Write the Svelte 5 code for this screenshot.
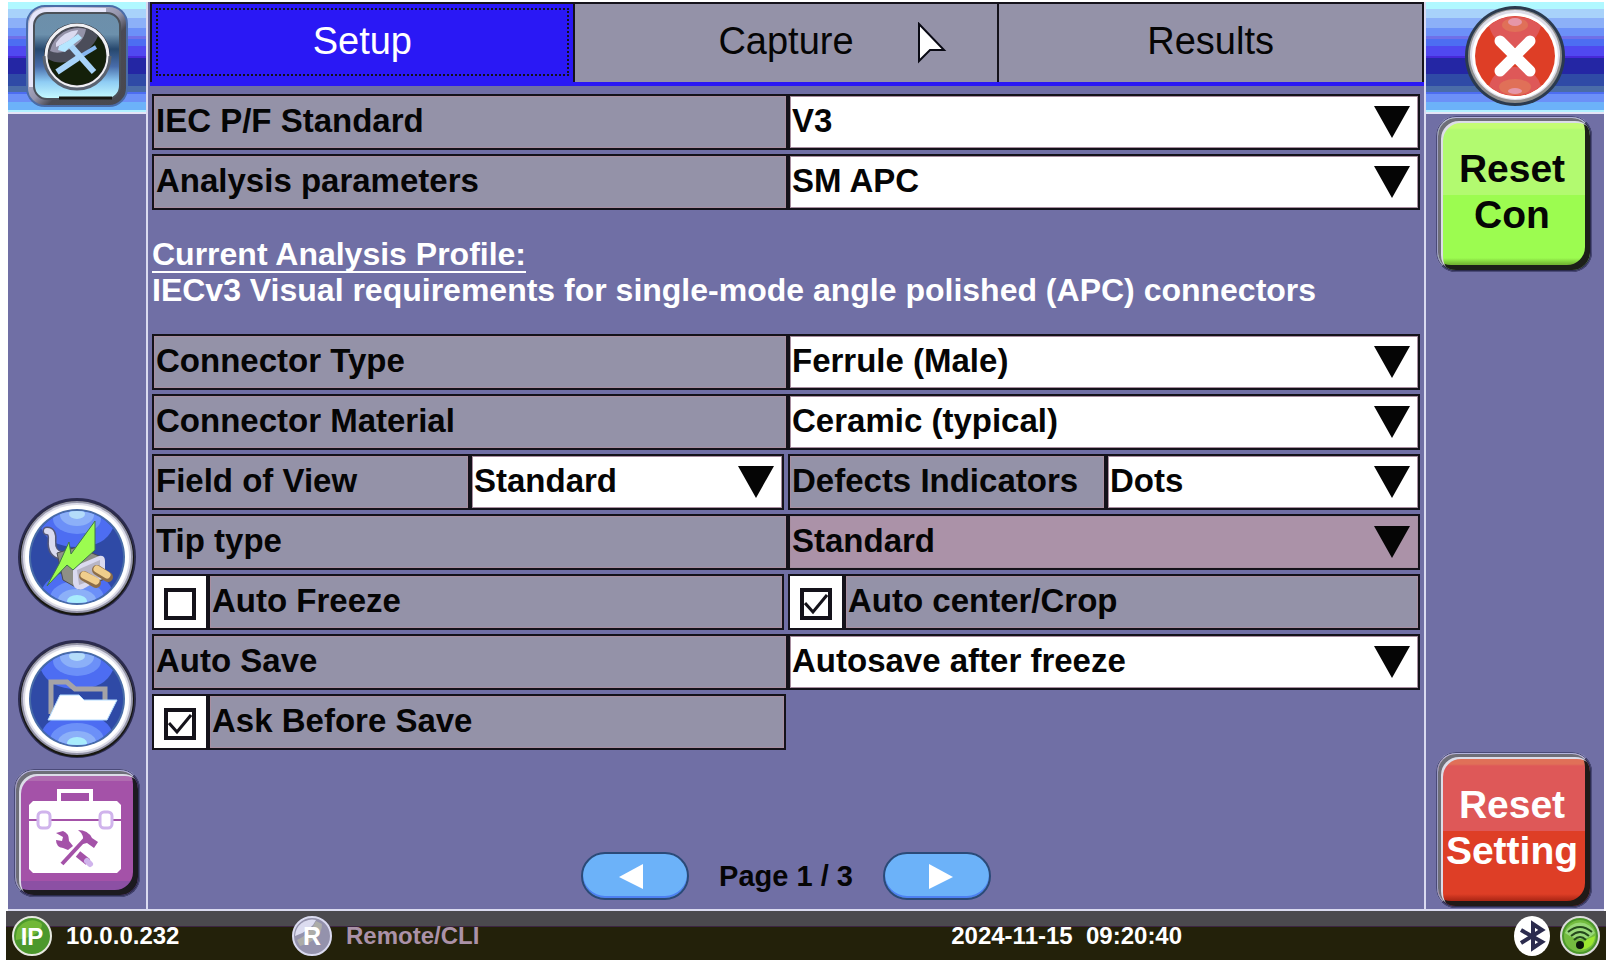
<script>
  // Tabs and current page
  const tabs = ['Setup', 'Capture', 'Results'];
  let activeTab = $state('Setup');
  let page = $state(1);
  const pageCount = 3;

  // Form values
  let form = $state({
    standard: 'V3',
    params: 'SM APC',
    connector: 'Ferrule (Male)',
    material: 'Ceramic (typical)',
    view: 'Standard',
    defects: 'Dots',
    tip: 'Standard',
    freeze: false,
    crop: true,
    autosave: 'Autosave after freeze',
    ask: true
  });

  const options = {
    standard: ['V3', 'V2'],
    params: ['SM APC', 'SM UPC', 'MM'],
    connector: ['Ferrule (Male)', 'Adapter (Female)'],
    material: ['Ceramic (typical)', 'Metal'],
    view: ['Standard', 'Wide'],
    defects: ['Dots', 'Outline'],
    tip: ['Standard'],
    autosave: ['Autosave after freeze', 'Off']
  };
</script>

{#snippet selectField(key, label, disabled)}
  <div class="field">
    <label class="cell label" for={key}>{label}</label>
    <div class="cell value" class:disabled>
      <select id={key} bind:value={form[key]} {disabled}>
        {#each options[key] as option}
          <option>{option}</option>
        {/each}
      </select>
      <svg class="arrow" viewBox="0 0 36 32" aria-hidden="true"><path d="M0 0H36L18 32Z" fill="#050505" /></svg>
    </div>
  </div>
{/snippet}

{#snippet checkField(key, label)}
  <div class="check-field">
    <div class="cell tick"><input type="checkbox" id={key} bind:checked={form[key]} /></div>
    <label class="cell label" for={key}>{label}</label>
  </div>
{/snippet}

{#snippet ring()}
  <circle cx="60" cy="60" r="59" fill="#2b2b4e" />
  <circle cx="60" cy="61" r="57" fill="#17170f" />
  <circle cx="60" cy="60" r="56" fill="#9494a8" />
  <circle cx="60" cy="60" r="54" fill="#dcdce8" />
  <circle cx="60" cy="60" r="52" fill="#fff" />
  <circle cx="60" cy="60" r="48" fill="#486ca8" />
  <circle cx="60" cy="60" r="46" fill="#2f4aa6" />
  <g clip-path="url(#disc)">
    <path d="M24 31A46 46 0 0 1 96 31Q88 50 60 50Q32 50 24 31Z" fill="#4d6df2" />
    <ellipse cx="60" cy="22" rx="24" ry="15" fill="#6c90f8" />
    <ellipse cx="60" cy="18" rx="17" ry="11" fill="#8cb0f8" />
    <ellipse cx="60" cy="17" rx="8" ry="5" fill="#b4dcfa" />
    <ellipse cx="60" cy="98" rx="36" ry="24" fill="#4d6df2" />
    <ellipse cx="60" cy="101" rx="27" ry="17" fill="#6c90f8" />
    <ellipse cx="60" cy="103" rx="19" ry="11" fill="#8cb0f8" />
    <ellipse cx="60" cy="104" rx="10" ry="6" fill="#a8ecfc" />
  </g>
{/snippet}

<div class="device">
  <div class="main">
    <aside class="side left">
      <div class="banner">
        <button class="icon-button" aria-label="Tools">
          <svg width="102" height="102" viewBox="0 0 102 102">
            <defs>
              <linearGradient id="frame" x1="0" y1="0" x2="1" y2="1">
                <stop offset="0" stop-color="#9696aa" /><stop offset=".15" stop-color="#dadaf0" />
                <stop offset=".5" stop-color="#9494ac" /><stop offset=".6" stop-color="#4a4a54" /><stop offset="1" stop-color="#48484e" />
              </linearGradient>
              <linearGradient id="glass" x1="0" y1="0" x2="0" y2="1">
                <stop offset="0" stop-color="#6d8faa" /><stop offset=".25" stop-color="#6c90ac" /><stop offset=".42" stop-color="#27486e" />
                <stop offset=".62" stop-color="#486caa" /><stop offset=".8" stop-color="#8eccf4" /><stop offset="1" stop-color="#c8fcff" />
              </linearGradient>
            </defs>
            <rect x="1" y="1" width="100" height="100" rx="18" fill="url(#frame)" stroke="#4a6ca8" stroke-width="2" />
            <path d="M5 82V22Q5 5 22 5H80" fill="none" stroke="#e6e6fa" stroke-width="4" />
            <rect x="8" y="8" width="86" height="86" rx="13" fill="url(#glass)" stroke="#4b5058" stroke-width="2" />
            <path d="M33 93H86" stroke="#171710" stroke-width="3" />
            <circle cx="51" cy="51" r="33" fill="#26262c" />
            <circle cx="51" cy="51" r="29" fill="#14200a" />
            <path d="M22 54A29 29 0 0 1 72 31Q66 46 44 56Q32 60 22 54Z" fill="#4b4d5a" />
            <path d="M24 46A29 29 0 0 1 60 24Q58 38 42 45Q32 50 24 46Z" fill="#9492a8" />
            <path d="M30 38Q38 26 52 25Q50 34 30 42Z" fill="#dadaf0" />
            <circle cx="51" cy="51" r="31" fill="none" stroke="#f0f0f4" stroke-width="3" />
            <path d="M18 51A33 33 0 0 0 84 51" fill="none" stroke="#5a6270" stroke-width="3" />
            <path d="M50 54L70 42" stroke="#86b6f0" stroke-width="4" />
            <path d="M31 67L52 53" stroke="#a8d4fa" stroke-width="6" />
            <path d="M44 40L68 67" stroke="#a8d4fa" stroke-width="6" />
            <path d="M32 45L39 47L44 42L56 33L52 29L42 36L33 41Z" fill="#b6e6ff" />
          </svg>
        </button>
      </div>
      <nav class="tools">
        <button class="icon-button" aria-label="Power">
          <svg width="120" height="120" viewBox="0 0 120 120">
            <defs><clipPath id="disc"><circle cx="60" cy="60" r="46" /></clipPath></defs>
            {@render ring()}
            <path d="M30 34Q36 34 35 44Q34 56 43 58" fill="none" stroke="#55587a" stroke-width="9" stroke-linecap="round" />
            <path d="M30 34Q36 34 35 44Q34 56 45 59" fill="none" stroke="#dadaf0" stroke-width="6" stroke-linecap="round" />
            <path d="M40 56L60 50L87 61L88 82L62 92L46 83Z" fill="#8e8f86" stroke="#4a4a54" />
            <path d="M56 70L82 59Q88 58 88 64V80L66 92Q57 94 56 86Z" fill="#dadaf0" />
            <path d="M60 73L83 63V80L62 88Z" fill="#b7b5c6" />
            <path d="M67 79L79 86M80 73L91 80" stroke="#8c6d48" stroke-width="10" stroke-linecap="round" />
            <path d="M67 78L79 84M80 72L90 78" stroke="#f0ce8c" stroke-width="7" stroke-linecap="round" />
            <path d="M78 24L54 57L52 45L42 67L30 89L50 68L56 73L78 53Z" fill="#9cfc50" stroke="#40764c" stroke-width="1" />
          </svg>
        </button>
        <button class="icon-button" aria-label="Files">
          <svg width="120" height="120" viewBox="0 0 120 120">
            {@render ring()}
            <path d="M34 75V43H50L58 50H88V65" fill="none" stroke="#a5a3a6" stroke-width="5" />
            <path d="M31 81L43 56H62L67 61H100L90 81Z" fill="#fff" stroke="#b4dcff" stroke-width="1" />
          </svg>
        </button>
        <button class="bevel toolbox" aria-label="Toolbox">
          <svg width="94" height="86" viewBox="0 0 94 86">
            <path d="M31 14V3H63V14" fill="none" stroke="#fff" stroke-width="4" />
            <path d="M5 13H89L93 17V81L89 85H5L1 81V17Z" fill="#fff" />
            <path d="M1 32H93" stroke="#a452a8" stroke-width="2" />
            <rect x="10" y="24" width="12" height="16" rx="4" fill="#fff" stroke="#d0b4ec" stroke-width="3" />
            <rect x="72" y="24" width="12" height="16" rx="4" fill="#fff" stroke="#d0b4ec" stroke-width="3" />
            <path d="M28 45L35 43Q41 45 41 53L45 58L40 62L35 60Q28 59 28 52L34 53L35 49Z" fill="#a452a8" />
            <path d="M50 66L60 74" stroke="#a452a8" stroke-width="7" />
            <path d="M59 73L62 76" stroke="#d0b4ec" stroke-width="6" stroke-linecap="round" />
            <path d="M34 76L58 50" stroke="#a452a8" stroke-width="4" />
            <path d="M50 42Q60 42 64 50L70 54L66 60L59 55L55 56Q57 47 50 42Z" fill="#a452a8" />
          </svg>
        </button>
      </nav>
    </aside>

    <main class="content">
      <div class="tabs" role="tablist">
        {#each tabs as tab}
          <button class="tab" class:active={activeTab === tab} role="tab" aria-selected={activeTab === tab} onclick={() => (activeTab = tab)}>
            {tab}
            {#if tab === 'Capture'}
              <svg class="pointer" width="30" height="42" viewBox="0 0 30 42" aria-hidden="true">
                <path d="M2 2L27 28H13L2 39Z" fill="#fff" stroke="#0a0a14" stroke-width="2" />
              </svg>
            {/if}
          </button>
        {/each}
      </div>

      <form class="settings">
        {@render selectField('standard', 'IEC P/F Standard', false)}
        {@render selectField('params', 'Analysis parameters', false)}

        <div class="profile">
          <h2>Current Analysis Profile:</h2>
          <p>IECv3 Visual requirements for single-mode angle polished (APC) connectors</p>
        </div>

        {@render selectField('connector', 'Connector Type', false)}
        {@render selectField('material', 'Connector Material', false)}
        <div class="pair">
          {@render selectField('view', 'Field of View', false)}
          {@render selectField('defects', 'Defects Indicators', false)}
        </div>
        {@render selectField('tip', 'Tip type', true)}
        <div class="pair">
          {@render checkField('freeze', 'Auto Freeze')}
          {@render checkField('crop', 'Auto center/Crop')}
        </div>
        {@render selectField('autosave', 'Auto Save', false)}
        <div class="half">
          {@render checkField('ask', 'Ask Before Save')}
        </div>
      </form>

      <div class="pager">
        <button class="pill prev" aria-label="Previous page" onclick={() => (page = Math.max(1, page - 1))}>
          <svg width="24" height="25" viewBox="0 0 24 25"><path d="M24 0V25L0 13Z" fill="#fff" /></svg>
        </button>
        <span>Page {page} / {pageCount}</span>
        <button class="pill next" aria-label="Next page" onclick={() => (page = Math.min(pageCount, page + 1))}>
          <svg width="24" height="25" viewBox="0 0 24 25"><path d="M0 0V25L24 13Z" fill="#fff" /></svg>
        </button>
      </div>
    </main>

    <aside class="side right">
      <div class="banner">
        <button class="icon-button" aria-label="Close">
          <svg width="100" height="102" viewBox="0 0 100 102">
            <circle cx="50" cy="51" r="50" fill="#2b3a4e" />
            <circle cx="50" cy="51" r="47" fill="#8d8d8c" />
            <circle cx="50" cy="50" r="45" fill="#dcdce8" />
            <circle cx="50" cy="51" r="43" fill="#fff" />
            <circle cx="50" cy="51" r="40" fill="#de3e26" />
            <path d="M24 21A40 40 0 0 1 76 21Q70 42 50 42Q30 42 24 21Z" fill="#de5858" />
            <path d="M24 81A40 40 0 0 0 76 81Q70 62 50 62Q30 62 24 81Z" fill="#de5858" />
            <ellipse cx="50" cy="20" rx="13" ry="7" fill="#e07058" />
            <ellipse cx="50" cy="17" rx="7" ry="4" fill="#e696a8" />
            <ellipse cx="50" cy="82" rx="16" ry="8" fill="#e07058" />
            <ellipse cx="50" cy="86" rx="7" ry="3" fill="#e696a8" />
            <path d="M35 36L65 66M65 36L35 66" stroke="#fff" stroke-width="11" stroke-linecap="round" />
          </svg>
        </button>
      </div>
      <div class="resets">
        <button class="bevel green">Reset Con</button>
        <button class="bevel red">Reset Setting</button>
      </div>
    </aside>
  </div>

  <footer class="status">
    <div class="status-item">
      <svg width="40" height="40" viewBox="0 0 40 40">
        <circle cx="20" cy="20" r="19" fill="#4c982c" stroke="#e6e8e0" stroke-width="2" />
        <path d="M4 20A16 16 0 0 1 30 8Q30 20 4 24Z" fill="#72b838" />
        <text x="20" y="29" text-anchor="middle" font-size="24" font-weight="bold" fill="#fff">IP</text>
      </svg>
      <span>10.0.0.232</span>
    </div>
    <div class="status-item muted">
      <svg width="40" height="40" viewBox="0 0 40 40">
        <circle cx="20" cy="20" r="19" fill="#9492ac" stroke="#dadaf0" stroke-width="2" />
        <path d="M3 20A17 17 0 0 1 24 4Q20 14 3 20Z" fill="#dcdcf0" />
        <path d="M5 24Q18 18 24 5L30 8Q30 24 8 30Z" fill="#acaca8" />
        <text x="20" y="29" text-anchor="middle" font-size="25" font-weight="bold" fill="#fff">R</text>
      </svg>
      <span>Remote/CLI</span>
    </div>
    <time>2024-11-15&nbsp; 09:20:40</time>
    <div class="status-icons">
      <svg width="36" height="40" viewBox="0 0 36 40">
        <ellipse cx="18" cy="20" rx="18" ry="20" fill="#fff" />
        <path d="M7 14L28 26L19 32V8L28 14L7 27" fill="none" stroke="#2b2b4e" stroke-width="4" />
      </svg>
      <svg width="40" height="40" viewBox="0 0 40 40">
        <circle cx="20" cy="20" r="19" fill="#4c982c" stroke="#dcdcdc" stroke-width="2" />
        <circle cx="20" cy="20" r="16" fill="#74bc40" />
        <path d="M5 17A16 16 0 0 1 35 17Q22 29 5 17Z" fill="#98d878" />
        <path d="M21 34Q34 32 35 20L25 24Z" fill="#9ce830" />
        <path d="M8 16Q20 6 32 16M11 20Q20 12 29 20M14 24Q20 18 26 24" fill="none" stroke="#24481c" stroke-width="2" />
        <circle cx="20" cy="29" r="4" fill="#0c180a" />
      </svg>
    </div>
  </footer>
</div>

<style>
  :global(body) {
    margin: 0;
    background: #fff;
  }

  .device {
    box-sizing: border-box;
    min-height: 100vh;
    padding: 2px 4px 6px 6px;
    display: flex;
    flex-direction: column;
    font-family: 'Liberation Sans', Arial, sans-serif;
    color: #050505;
  }

  .device button,
  .device select {
    font-family: inherit;
    color: inherit;
  }

  .main {
    flex: 1;
    display: grid;
    grid-template-columns: 138px 1fr 178px;
    margin: 0 2px;
    background: #706fa5;
    border-bottom: 2px solid #dadaf0;
  }

  /* Side columns */
  .side {
    display: flex;
    flex-direction: column;
  }

  .banner {
    height: 110px;
    display: flex;
    align-items: center;
    justify-content: center;
    border-bottom: 2px solid #e4e4f6;
    background: linear-gradient(
      #b0f8ff 0 7px, #a8d2fa 7px 16px, #8cb0f8 16px 26px, #6c90f8 26px 34px, #7070e8 34px 37px,
      #4d6df2 37px 44px, #5048f0 44px 54px, #4828d8 54px 56px, #2426a4 56px 72px, #2f4aa6 72px 84px,
      #4a6ca8 84px 90px, #4d6df2 90px 92px, #6c90f8 92px 100px, #6cb2f9 100px 108px, #b0f0ff 108px 110px
    );
  }

  .icon-button {
    display: block;
    padding: 0 0 2px;
    border: 0;
    background: none;
    cursor: pointer;
  }

  .icon-button svg {
    display: block;
  }

  .tools {
    flex: 1;
    display: flex;
    flex-direction: column;
    align-items: center;
    justify-content: flex-end;
    gap: 20px;
    padding-bottom: 12px;
  }

  .bevel {
    box-sizing: border-box;
    padding: 0 4px 4px 0;
    border: 2px solid;
    border-color: #b4b4dc #2b2b4e #2b2b4e #a0a0c4;
    border-radius: 20px;
    outline: 1px solid #4a4a78;
    outline-offset: -1px;
    cursor: pointer;
  }

  .toolbox {
    width: 126px;
    height: 128px;
    margin-top: -12px;
    display: flex;
    align-items: center;
    justify-content: center;
    background: linear-gradient(#b06cb0 0 10px, #a452a8 10px 110px, #8c50a4 110px);
    box-shadow: inset 3px 3px 0 #6e6e78, inset 5px 5px 0 #dcdce8, inset -5px -5px 0 #1c1a20;
  }

  .resets {
    flex: 1;
    display: flex;
    flex-direction: column;
    align-items: center;
    justify-content: space-between;
    padding: 2px 2px 1px 0;
  }

  .resets .bevel {
    width: 156px;
    height: 156px;
    font-size: 39px;
    font-weight: bold;
    line-height: 46px;
  }

  .green {
    background: linear-gradient(#c4fc74 0 10px, #b2fa70 12px 77px, #9cfc50 77px 140px, #74b834 146px);
    box-shadow: inset 3px 3px 0 #6e6e78, inset 5px 5px 0 #dcdce8, inset -5px -5px 0 #1c1f18;
  }

  .device .red {
    color: #fff;
    background: linear-gradient(#e07058 0 10px, #de5858 12px 77px, #de3e26 77px 140px, #b02816 146px);
    box-shadow: inset 3px 3px 0 #6e6e78, inset 5px 5px 0 #dcdce8, inset -5px -5px 0 #201a18;
  }

  /* Center */
  .content {
    display: flex;
    flex-direction: column;
    border: solid #dadaf0;
    border-width: 0 2px;
    padding-bottom: 9px;
    min-width: 0;
  }

  .tabs {
    display: grid;
    grid-template-columns: repeat(3, 1fr);
    margin-left: 2px;
    border-bottom: 4px solid #2a18f5;
  }

  .tab {
    position: relative;
    height: 80px;
    padding: 0 0 4px;
    border: 0 solid #14121a;
    border-width: 2px 2px 0 0;
    background: #9492a8;
    font-size: 38px;
  }

  .device .tab.active {
    color: #fff;
    background: #2a18f5;
    border-width: 2px 2px 0 2px;
    outline: 2px dotted #14121a;
    outline-offset: -8px;
  }

  .pointer {
    position: absolute;
    left: 81%;
    top: 18px;
  }

  .settings {
    display: flex;
    flex-direction: column;
    gap: 4px;
    padding: 8px 4px 0;
    font-size: 33px;
    font-weight: bold;
  }

  .field {
    display: grid;
    grid-template-columns: calc(50% + 2px) 1fr;
  }

  .check-field {
    display: grid;
    grid-template-columns: 56px 1fr;
  }

  .pair {
    display: grid;
    grid-template-columns: 1fr 1fr;
    gap: 4px;
  }

  .half {
    width: 50%;
  }

  .cell {
    box-sizing: border-box;
    height: 56px;
    border: 2px solid #14121a;
    box-shadow: inset 0 0 0 1px #a88ea0;
    white-space: nowrap;
    min-width: 0;
  }

  .label {
    padding-left: 2px;
    line-height: 50px;
    background: #9492a8;
  }

  .value {
    position: relative;
    background: #fff;
  }

  .value.disabled {
    background: #ab92a8;
  }

  .value select {
    width: 100%;
    height: 100%;
    padding: 0 50px 4px 2px;
    border: 0;
    background: none;
    appearance: none;
    font-size: 33px;
    font-weight: bold;
    opacity: 1;
  }

  .arrow {
    position: absolute;
    right: 8px;
    top: 10px;
    width: 36px;
    height: 32px;
    pointer-events: none;
  }

  .tick {
    display: flex;
    align-items: center;
    justify-content: center;
    padding-top: 4px;
    background: #fff;
    box-shadow: none;
  }

  .tick input {
    width: 32px;
    height: 32px;
    margin: 0;
    appearance: none;
    border: 4px solid #14121a;
    background: #fff;
  }

  .tick input:checked {
    background: url("data:image/svg+xml,%3Csvg xmlns='http://www.w3.org/2000/svg' viewBox='0 0 24 24'%3E%3Cpath d='M1 11L9 20L23 3' fill='none' stroke='%2314121a' stroke-width='3'/%3E%3C/svg%3E") center / 24px 24px no-repeat;
  }

  .profile {
    padding: 22px 0;
    color: #fff;
    font-size: 32px;
    line-height: 36px;
  }

  .profile h2,
  .profile p {
    margin: 0;
    font-size: inherit;
    font-weight: bold;
  }

  .profile h2 {
    text-decoration: underline;
    text-decoration-thickness: 2px;
    text-decoration-skip-ink: none;
    text-underline-offset: 6px;
  }

  .pager {
    display: flex;
    align-items: center;
    justify-content: center;
    gap: 30px;
    margin-top: auto;
    font-size: 29px;
    font-weight: bold;
  }

  .pill {
    width: 108px;
    height: 48px;
    display: flex;
    align-items: center;
    justify-content: center;
    border: 2px solid #2b4a78;
    border-radius: 24px;
    background: #6cb2f9;
    box-shadow: inset 0 -2px 0 #4d80f2;
  }

  .prev {
    padding: 0 8px 0 0;
  }

  .next {
    padding: 0 0 0 8px;
  }

  /* Status bar */
  .status {
    display: grid;
    grid-template-columns: 280px 663fr 566fr auto;
    align-items: center;
    height: 49px;
    padding: 0 6px;
    background: linear-gradient(#4b494e 0 15px, #3c2440 15px 16px, #23210a 16px);
    color: #fff;
    font-size: 24px;
    font-weight: bold;
  }

  .status-item {
    display: flex;
    align-items: center;
    gap: 14px;
  }

  .status-item.muted {
    color: #ab92a8;
  }

  .status-icons {
    display: flex;
    gap: 10px;
  }
</style>
